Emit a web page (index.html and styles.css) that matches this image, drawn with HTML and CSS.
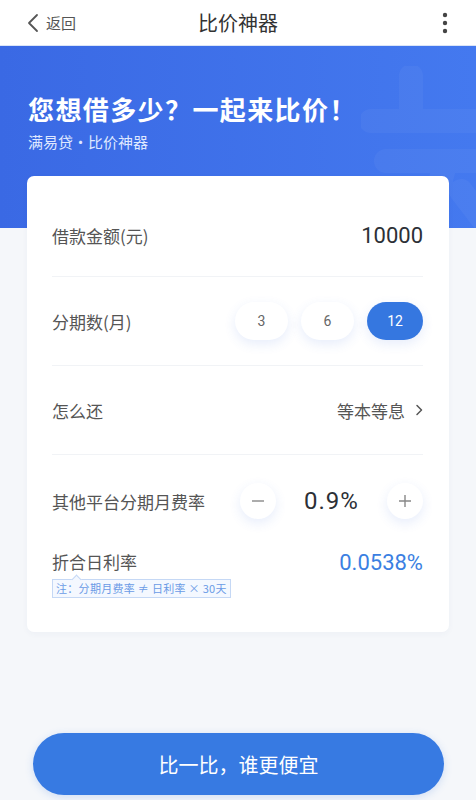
FILE: index.html
```html
<!DOCTYPE html>
<html lang="zh-CN">
<head>
    <meta charset="UTF-8">
    <meta name="viewport" content="width=device-width, initial-scale=1.0">
    <title>比价神器</title>
    <link rel="stylesheet" href="styles.css">
</head>
<body>
    <div class="page">
        <div class="nav">
            <div class="nav-back">
                <svg width="14" height="20" viewBox="0 0 14 20"><path d="M11 2 L3 10 L11 18" fill="none" stroke="#555" stroke-width="1.8" stroke-linecap="round" stroke-linejoin="round"/></svg>
                <span>返回</span>
            </div>
            <div class="nav-title">比价神器</div>
            <div class="nav-more">
                <svg width="6" height="22" viewBox="0 0 6 22"><circle cx="3" cy="3" r="2.2" fill="#444"/><circle cx="3" cy="11" r="2.2" fill="#444"/><circle cx="3" cy="19" r="2.2" fill="#444"/></svg>
            </div>
        </div>

        <div class="banner">
            <svg class="banner-mark" width="160" height="190" viewBox="0 0 160 190">
                <path d="M50 10 L50 50 M10 55 L150 55 M25 95 L140 95 M85 95 L60 185 M100 125 L150 190" fill="none" stroke="#ffffff" stroke-width="24" stroke-linecap="round"/>
            </svg>
            <h1>您想借多少？一起来比价！</h1>
            <p>满易贷·比价神器</p>
        </div>

        <div class="card">
            <div class="row row-first">
                <span class="label">借款金额(元)</span>
                <span class="amount">10000</span>
            </div>
            <div class="row">
                <span class="label">分期数(月)</span>
                <div class="pills">
                    <span class="pill">3</span>
                    <span class="pill">6</span>
                    <span class="pill pill-active">12</span>
                </div>
            </div>
            <div class="row">
                <span class="label">怎么还</span>
                <span class="select">等本等息
                    <svg width="8" height="12" viewBox="0 0 8 12"><path d="M2 1.5 L6.5 6 L2 10.5" fill="none" stroke="#555" stroke-width="1.5" stroke-linecap="round" stroke-linejoin="round"/></svg>
                </span>
            </div>
            <div class="row row-rate">
                <span class="label">其他平台分期月费率</span>
                <div class="stepper">
                    <span class="step-btn">
                        <svg width="14" height="14" viewBox="0 0 14 14"><path d="M1 7 H13" stroke="#888" stroke-width="1.4"/></svg>
                    </span>
                    <span class="rate">0.9%</span>
                    <span class="step-btn">
                        <svg width="14" height="14" viewBox="0 0 14 14"><path d="M1 7 H13 M7 1 V13" stroke="#888" stroke-width="1.4"/></svg>
                    </span>
                </div>
            </div>
            <div class="daily">
                <div class="daily-top">
                    <span class="label">折合日利率</span>
                    <span class="daily-value">0.0538%</span>
                </div>
                <span class="note">注：分期月费率 ≠ 日利率 × 30天</span>
            </div>
        </div>

        <div class="footer">
            <button class="compare-btn">比一比，谁更便宜</button>
        </div>
    </div>
</body>
</html>
```

FILE: styles.css
```css
body, html {
    margin: 0;
    padding: 0;
    background-color: #f5f7fa;
    font-family: "Noto Sans CJK SC", "Noto Sans", sans-serif;
}

.page {
    width: 476px;
    height: 800px;
    display: flex;
    flex-direction: column;
    overflow: hidden;
}

.nav {
    height: 45px;
    background-color: #fff;
    border-bottom: 1px solid #dbe5f7;
    display: flex;
    align-items: center;
    justify-content: space-between;
    padding: 0 28px 0 26px;
    position: relative;
}

.nav-back {
    display: flex;
    align-items: center;
    gap: 6px;
    font-size: 15px;
    color: #555;
}

.nav-title {
    position: absolute;
    left: 0;
    right: 0;
    text-align: center;
    font-size: 20px;
    color: #333;
    pointer-events: none;
}

.nav-more {
    display: flex;
    align-items: center;
}

.banner {
    height: 182px;
    box-sizing: border-box;
    padding: 44px 28px 0;
    background: linear-gradient(90deg, #3a69e4 0%, #4479ef 100%);
    color: #fff;
    position: relative;
    overflow: hidden;
}

.banner-mark {
    position: absolute;
    right: -45px;
    top: 20px;
    opacity: 0.035;
}

.banner h1 {
    margin: 0;
    font-size: 26px;
    line-height: 38px;
    font-weight: 700;
    letter-spacing: 1.4px;
}

.banner p {
    margin: 4px 0 0;
    font-size: 15px;
    line-height: 20px;
    color: #dfe8ff;
}

.card {
    margin: -52px 27px 0 27px;
    background-color: #fff;
    border-radius: 7px;
    padding: 17px 26px 0 25px;
    height: 456px;
    box-sizing: border-box;
    box-shadow: 0 2px 6px rgba(40, 70, 140, 0.04);
    position: relative;
}

.row {
    height: 89px;
    display: flex;
    align-items: center;
    justify-content: space-between;
    border-bottom: 1px solid #f1f3f6;
    box-sizing: border-box;
}

.row-first {
    height: 84px;
    padding-top: 2px;
}

.row-rate {
    border-bottom: none;
    height: 92px;
}

.label {
    font-size: 17px;
    color: #555;
}

.amount {
    font-family: "Roboto", "Noto Sans", sans-serif;
    font-size: 22px;
    color: #2c3036;
}

.pills {
    display: flex;
    gap: 13px;
}

.pill {
    width: 53px;
    height: 38px;
    border-radius: 19px;
    background-color: #fff;
    box-shadow: 0 4px 12px rgba(60, 110, 220, 0.12);
    display: flex;
    align-items: center;
    justify-content: center;
    font-family: "Roboto", sans-serif;
    font-size: 14px;
    color: #666;
}

.pill-active {
    width: 56px;
    background-color: #3577e0;
    color: #fff;
}

.select {
    display: flex;
    align-items: center;
    gap: 10px;
    font-size: 17px;
    color: #555;
}

.stepper {
    display: flex;
    align-items: center;
}

.step-btn {
    width: 36px;
    height: 36px;
    border-radius: 50%;
    background-color: #fff;
    box-shadow: 0 4px 12px rgba(60, 110, 220, 0.12);
    display: flex;
    align-items: center;
    justify-content: center;
}

.rate {
    width: 111px;
    text-align: center;
    font-family: "Roboto", sans-serif;
    font-size: 24px;
    letter-spacing: 1px;
    color: #2c3036;
}

.daily {
    padding-top: 1px;
}

.daily-top {
    display: flex;
    align-items: center;
    justify-content: space-between;
    height: 26px;
}

.daily-value {
    font-family: "Roboto", sans-serif;
    font-size: 22px;
    color: #3b7fe2;
    padding-top: 3px;
}

.note {
    display: inline-block;
    margin-top: 3px;
    height: 19px;
    line-height: 17px;
    box-sizing: border-box;
    padding: 0 3px;
    border: 1px solid #c5d8f5;
    background-color: #f4f8ff;
    font-size: 11px;
    letter-spacing: 0.3px;
    color: #6b9be6;
    position: relative;
}

.note::before {
    content: "";
    position: absolute;
    left: 20px;
    top: -4px;
    width: 6px;
    height: 6px;
    background-color: #f4f8ff;
    border-left: 1px solid #c5d8f5;
    border-top: 1px solid #c5d8f5;
    transform: rotate(45deg);
}

.footer {
    margin-top: auto;
    padding: 0 32px 5px 33px;
}

.compare-btn {
    width: 100%;
    height: 62px;
    border: none;
    border-radius: 31px;
    background-color: #377ae2;
    color: #fff;
    font-family: "Noto Sans CJK SC", sans-serif;
    font-size: 20px;
    box-shadow: 0 2px 8px rgba(55, 122, 226, 0.2);
}
```
